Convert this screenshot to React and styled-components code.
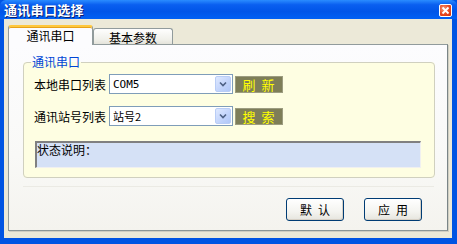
import React from "react";
import styled, { createGlobalStyle } from "styled-components";

const Global = createGlobalStyle`
  html, body { margin: 0; padding: 0; background: #fff; }
  body { font-family: "Noto Sans CJK SC", "Liberation Sans", sans-serif; }
  * { box-sizing: border-box; }
`;

const Window = styled.div`
  width: 457px;
  height: 244px;
  display: flex;
  flex-direction: column;
  background: #0054e3;
`;

const TitleBar = styled.div`
  height: 19px;
  display: flex;
  align-items: center;
  justify-content: space-between;
  padding: 0 5px 0 4px;
  background: linear-gradient(#2a8cff 0%, #0a5ff0 25%, #0055e8 60%, #0060f4 100%);
  border-radius: 6px 6px 0 0;
`;

const Title = styled.span`
  color: #fff;
  font-size: 13px;
  font-weight: bold;
  letter-spacing: 0.3px;
  line-height: 19px;
  text-shadow: 1px 1px 0 #0a1e6e;
`;

const CloseBtn = styled.div`
  width: 13px;
  height: 13px;
  margin-top: 1px;
  border: 1px solid #fff;
  border-radius: 2px;
  background: radial-gradient(circle at 35% 35%, #f59a78, #e8471f 55%, #cc3210);
  display: flex;
  align-items: center;
  justify-content: center;
`;

const Body = styled.div`
  flex: 1;
  margin: 0 5px 6px 4px;
  background: #ece9d8;
  padding: 6px 0 5px 4px;
  display: flex;
  flex-direction: column;
`;

const TabStrip = styled.div`
  display: flex;
  align-items: flex-end;
  height: 19px;
  position: relative;
  z-index: 1;
`;

const Tab = styled.div`
  font-size: 12px;
  color: #000;
  display: flex;
  align-items: center;
  justify-content: center;
  border: 1px solid #919b9c;
  border-bottom: none;
  border-radius: 3px 3px 0 0;
  ${(p) =>
    p.$active
      ? `
    width: 85px;
    height: 20px;
    margin-bottom: -1px;
    background: #fcfcfe;
    border-top: 2px solid #ffc83c;
    box-shadow: inset 0 1px 0 #e6a21c;
    padding-bottom: 1px;
  `
      : `
    width: 80px;
    height: 16px;
    background: linear-gradient(#fefefe, #f0f0ea 70%, #e4e3da);
    padding-top: 1px;
  `}
`;

const Panel = styled.div`
  width: 440px;
  height: 187px;
  border: 1px solid #919b9c;
  border-right-color: #7a8587;
  border-bottom-color: #8c9697;
  background: linear-gradient(#fcfcfe 0%, #f9f9f7 60%, #f4f3ee 100%);
  padding: 10px 13px 0 14px;
  display: flex;
  flex-direction: column;
  box-shadow: 1px 1px 0 #d0cec3;
`;

const Group = styled.fieldset`
  margin: 0;
  width: 412px;
  height: 123px;
  border: 1px solid #d0d0bf;
  border-radius: 4px;
  background: #fefee2;
  padding: 5px 12px 0 10px;
  display: flex;
  flex-direction: column;
`;

const Legend = styled.legend`
  color: #0046d5;
  font-size: 12px;
  padding: 0 1px;
  margin-left: -3px;
  line-height: 14px;
  background: transparent;
`;

const Row = styled.div`
  display: flex;
  align-items: center;
  height: 20px;
  margin-bottom: ${(p) => p.$mb || 0}px;
`;

const Label = styled.span`
  font-size: 12px;
  color: #000;
  width: 75px;
  white-space: nowrap;
`;

const Combo = styled.div`
  width: 124px;
  height: 20px;
  border: 1px solid #7f9db9;
  background: #fff;
  display: flex;
  align-items: center;
  padding: 1px;
`;

const ComboText = styled.span`
  flex: 1;
  font-size: 11px;
  color: #000;
  padding-left: 2px;
  font-family: ${(p) => (p.$latin ? '"DejaVu Sans Mono", monospace' : '"Noto Sans CJK SC", sans-serif')};
`;

const DropBtn = styled.div`
  width: 16px;
  height: 16px;
  border: 1px solid #b9cdf6;
  border-radius: 2px;
  background: linear-gradient(135deg, #dfe9ff, #c1d3fb 60%, #b1c8f8);
  display: flex;
  align-items: center;
  justify-content: center;
`;

const OliveBtn = styled.div`
  width: 48px;
  height: 17px;
  margin-left: 2px;
  background: #7e7e58;
  border: 1px solid #9c9c80;
  color: #ffff00;
  font-size: 13px;
  display: flex;
  align-items: center;
  justify-content: center;
  letter-spacing: 6px;
  padding-left: 5px;
  line-height: 1;
`;

const Status = styled.div`
  margin-left: 1px;
  width: 386px;
  height: 27px;
  background: #d5e1f6;
  border-top: 2px solid #808080;
  border-left: 2px solid #808080;
  border-right: 1px solid #f0f0f0;
  border-bottom: 1px solid #f0f0f0;
  font-size: 12px;
  line-height: 14px;
  color: #000;
`;

const Footer = styled.div`
  flex: 1;
  display: flex;
  justify-content: flex-end;
  align-items: flex-start;
  gap: 20px;
  margin-top: 8px;
  padding-top: 11px;
  padding-right: 12px;
  border-top: 1px solid #ebeae4;
`;

const Button = styled.button`
  width: 58px;
  height: 23px;
  border: 1px solid #003c74;
  border-radius: 3px;
  background: linear-gradient(#ffffff, #f4f4f0 60%, #e6e5de);
  box-shadow: inset -1px -1px 0 #d6d0c5;
  font-family: "Noto Sans CJK SC", sans-serif;
  font-size: 12px;
  color: #000;
  letter-spacing: 6px;
  padding: 0 0 0 6px;
`;

const Chevron = () => (
  <svg width="8" height="6" viewBox="0 0 8 6">
    <path d="M1 1.5 L4 4.5 L7 1.5" stroke="#4d6185" strokeWidth="1.6" fill="none" />
  </svg>
);

const XIcon = () => (
  <svg width="9" height="9" viewBox="0 0 9 9">
    <path d="M1.5 1.5 L7.5 7.5 M7.5 1.5 L1.5 7.5" stroke="#fff" strokeWidth="1.8" />
  </svg>
);

export default function App() {
  return (
    <>
      <Global />
      <Window>
        <TitleBar>
          <Title>通讯串口选择</Title>
          <CloseBtn>
            <XIcon />
          </CloseBtn>
        </TitleBar>
        <Body>
          <TabStrip>
            <Tab $active>通讯串口</Tab>
            <Tab>基本参数</Tab>
          </TabStrip>
          <Panel>
            <Group>
              <Legend>通讯串口</Legend>
              <Row $mb={12}>
                <Label>本地串口列表</Label>
                <Combo>
                  <ComboText $latin>COM5</ComboText>
                  <DropBtn>
                    <Chevron />
                  </DropBtn>
                </Combo>
                <OliveBtn>刷新</OliveBtn>
              </Row>
              <Row $mb={15}>
                <Label>通讯站号列表</Label>
                <Combo>
                  <ComboText>站号2</ComboText>
                  <DropBtn>
                    <Chevron />
                  </DropBtn>
                </Combo>
                <OliveBtn>搜索</OliveBtn>
              </Row>
              <Status>状态说明：</Status>
            </Group>
            <Footer>
              <Button>默认</Button>
              <Button>应用</Button>
            </Footer>
          </Panel>
        </Body>
      </Window>
    </>
  );
}
